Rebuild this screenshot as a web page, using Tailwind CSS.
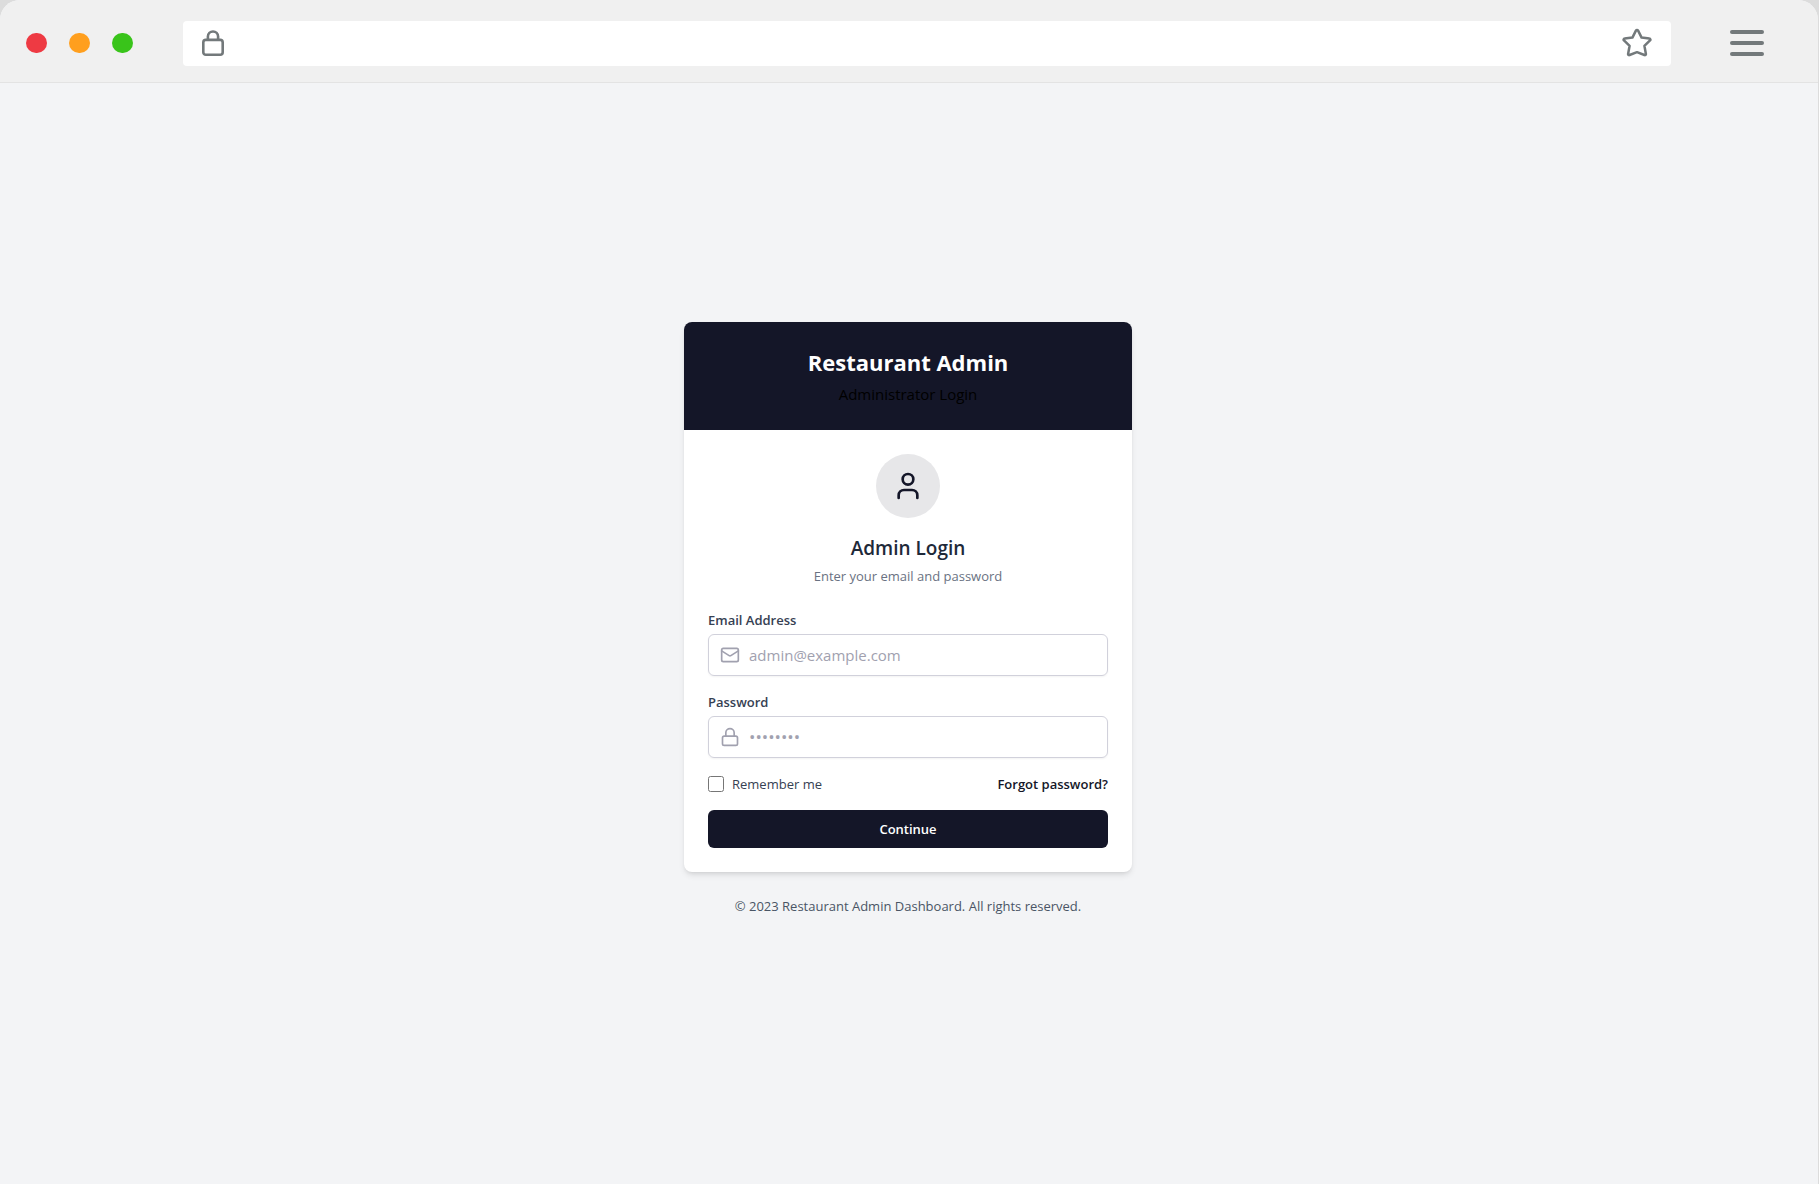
<!DOCTYPE html>
<html lang="en">
<head>
  <meta charset="UTF-8">
  <meta name="viewport" content="width=device-width, initial-scale=1.0">
  <title>Restaurant Admin - Login</title>
  <script src="https://cdn.jsdelivr.net/npm/@tailwindcss/browser@4"></script>
</head>
<body class="bg-[#dcdcdc] font-['Open_Sans',sans-serif]">
  <div class="min-h-screen flex flex-col bg-gray-100 rounded-t-[20px] overflow-hidden mr-px">

    <!-- Browser bar -->
    <header class="flex items-center bg-[#f0f0f0] border-b border-[#e3e3e3] h-[83px] pl-[26px] pr-[54px] pt-1">
      <div class="flex gap-[22px]">
        <span class="w-[21px] h-5 rounded-full bg-[#ee3a43]"></span>
        <span class="w-[21px] h-5 rounded-full bg-[#ff9f1e]"></span>
        <span class="w-[21px] h-5 rounded-full bg-[#39c41a]"></span>
      </div>
      <div class="flex-1 flex items-center justify-between h-[45px] ml-[50px] mr-[59px] px-[19px] bg-white rounded">
        <svg class="w-[22px] h-[26px]" viewBox="0 0 22 26" fill="none" stroke="#73797b" stroke-width="2.6">
          <rect x="1.3" y="9.9" width="19.4" height="14.8" rx="2.5"/>
          <path d="M5.9 9.7V6.6a5.1 5.1 0 0 1 10.2 0v3.1"/>
        </svg>
        <svg class="w-[30px] h-[30px]" viewBox="0 0 30 30" fill="none" stroke="#73797b" stroke-width="2.5" stroke-linejoin="round">
          <path d="M13.9 2.6a1.3 1.3 0 0 1 2.2 0l3.5 7 7.8 1a1 1 0 0 1 .6 1.8l-5.6 5.4 1.5 8.2a1 1 0 0 1-1.5 1L15 24.2 7.6 27a1 1 0 0 1-1.5-1l1.5-8.2L2 12.400a1 1 0 0 1 .6-1.8l7.800-1z"/>
        </svg>
      </div>
      <button type="button" aria-label="Menu" class="flex flex-col gap-[7px] w-[34px]">
        <span class="h-1 rounded-full bg-[#73797b]"></span>
        <span class="h-1 rounded-full bg-[#73797b]"></span>
        <span class="h-1 rounded-full bg-[#73797b]"></span>
      </button>
    </header>

    <!-- Page -->
    <main class="flex-1 flex flex-col items-center justify-center pb-[30px] pr-0.5">
      <div class="w-full max-w-md bg-white rounded-lg shadow-md overflow-hidden">
        <div class="bg-[#141628] p-6 text-center">
          <h1 class="text-[22px] leading-8 font-bold text-white">Restaurant Admin</h1>
          <p class="mt-1 text-[15px] leading-6 text-black">Administrator Login</p>
        </div>

        <form class="p-6">
          <div class="text-center">
            <div class="mx-auto w-16 h-16 rounded-full bg-[#e7e7e9] flex items-center justify-center">
              <svg class="w-8 h-8" viewBox="0 0 24 24" fill="none" stroke="#141628" stroke-width="2" stroke-linecap="round" stroke-linejoin="round">
                <path d="M19 21v-2a4 4 0 0 0-4-4H9a4 4 0 0 0-4 4v2"/>
                <circle cx="12" cy="7" r="4"/>
              </svg>
            </div>
            <h2 class="mt-4 text-[19px] leading-7 font-semibold text-gray-800">Admin Login</h2>
            <p class="mt-1 text-[13px] leading-5 text-gray-500">Enter your email and password</p>
          </div>

          <label for="email" class="block mt-6 text-[13px] leading-5 font-semibold text-gray-700">Email Address</label>
          <div class="flex items-center gap-[9px] mt-1 h-[42px] px-[11px] border border-[#d1d1db] rounded-md shadow-xs">
            <svg class="w-5 h-5 shrink-0 text-[#a1a1af]" viewBox="0 0 24 24" fill="none" stroke="currentColor" stroke-width="2" stroke-linecap="round" stroke-linejoin="round">
              <rect x="2" y="4" width="20" height="16" rx="2"/>
              <path d="m22 7-8.970 5.700a1.940 1.940 0 0 1-2.060 0L2 7"/>
            </svg>
            <input id="email" type="email" placeholder="admin@example.com" class="flex-1 text-[15px] leading-6 outline-none placeholder:text-[#a1a1af]">
          </div>

          <label for="password" class="block mt-4 text-[13px] leading-5 font-semibold text-gray-700">Password</label>
          <div class="flex items-center gap-[9px] mt-1 h-[42px] px-[11px] border border-[#d1d1db] rounded-md shadow-xs">
            <svg class="w-5 h-5 shrink-0 text-[#a1a1af]" viewBox="0 0 24 24" fill="none" stroke="currentColor" stroke-width="2" stroke-linecap="round" stroke-linejoin="round">
              <rect x="3" y="11" width="18" height="11" rx="2"/>
              <path d="M7 11V7a5 5 0 0 1 10 0v4"/>
            </svg>
            <input id="password" type="password" placeholder="••••••••" class="flex-1 text-[17px] leading-6 outline-none placeholder:text-[#a1a1af]">
          </div>

          <div class="flex items-center justify-between mt-4 text-[13px] leading-5">
            <div class="flex items-center gap-2">
              <input id="remember" type="checkbox" class="w-4 h-4">
              <label for="remember" class="text-gray-700">Remember me</label>
            </div>
            <a href="#" class="font-semibold text-[#141628]">Forgot password?</a>
          </div>

          <button type="submit" class="w-full mt-4 h-[38px] rounded-md bg-[#141628] text-[13px] leading-5 font-semibold text-white">Continue</button>
        </form>
      </div>

      <p class="mt-6 text-[13px] leading-5 text-gray-600">© 2023 Restaurant Admin Dashboard. All rights reserved.</p>
    </main>
  </div>
</body>
</html>
